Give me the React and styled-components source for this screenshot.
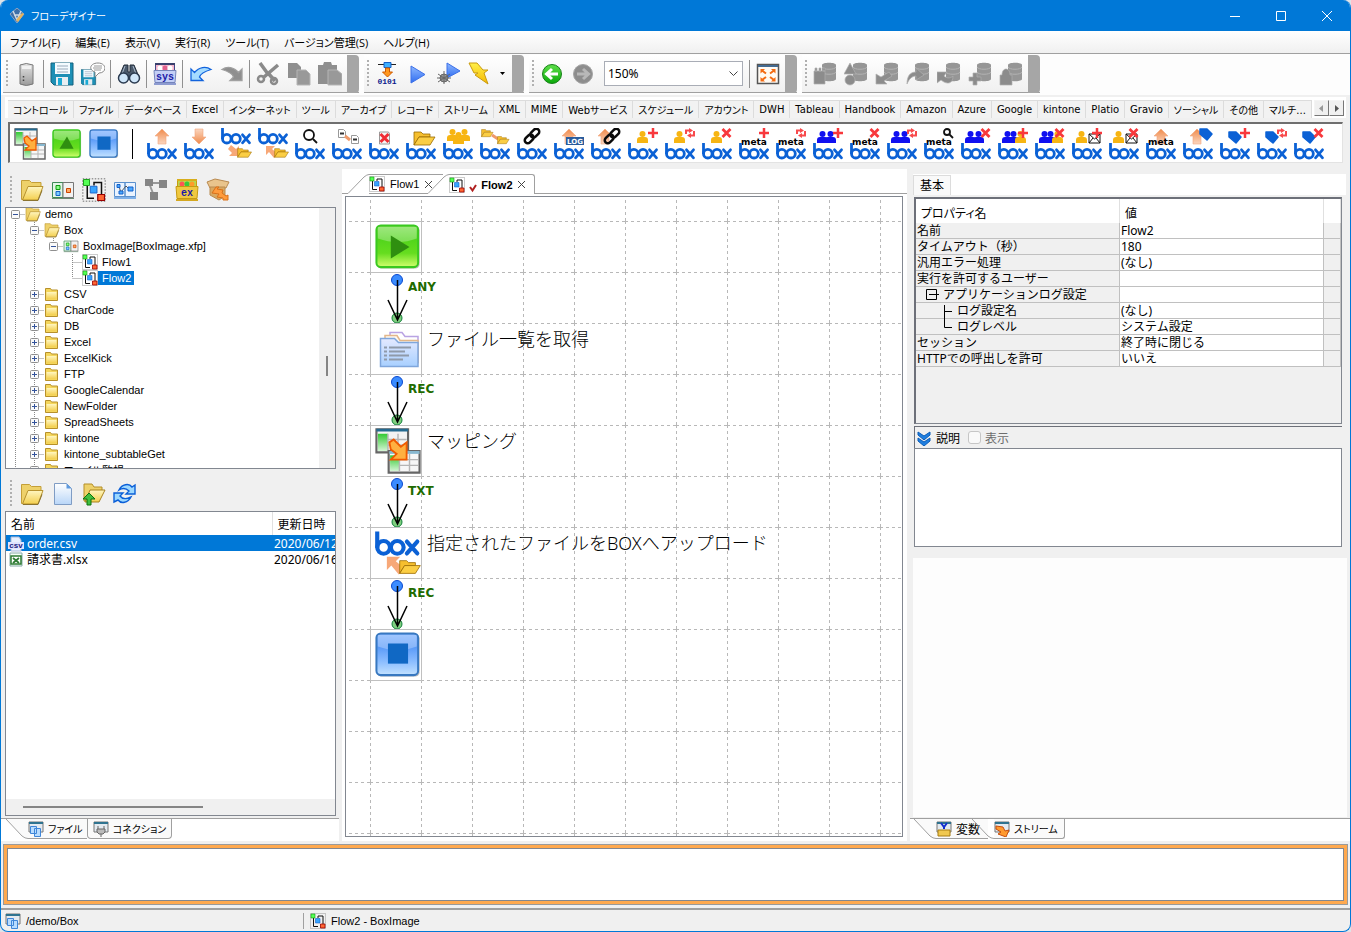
import styled, {createGlobalStyle, css} from 'styled-components';
import {useState} from "react";

const categories = ["コントロール", "ファイル", "データベース", "Excel", "インターネット", "ツール", "アーカイブ", "レコード", "ストリーム", "XML", "MIME", "Webサービス", "スケジュール", "アカウント", "DWH", "Tableau", "Handbook", "Amazon", "Azure", "Google", "kintone", "Platio", "Gravio", "ソーシャル", "その他", "マルチ..."];

const menus = ["ファイル(F)", "編集(E)", "表示(V)", "実行(R)", "ツール(T)", "バージョン管理(S)", "ヘルプ(H)"];

// branch codes: v = line, b = blank, t = tee, e = end, r = root
const tree = [
    {name: "demo", icon: "open", cells: ["r-"]},
    {name: "Box", icon: "open", cells: ["v", "t-"]},
    {name: "BoxImage[BoxImage.xfp]", icon: "project", cells: ["v", "v", "e-"]},
    {name: "Flow1", icon: "flow", cells: ["v", "v", "b", "t"]},
    {name: "Flow2", icon: "flow", cells: ["v", "v", "b", "e"]},
    ...["CSV", "CharCode", "DB", "Excel", "ExcelKick", "FTP", "GoogleCalendar", "NewFolder", "SpreadSheets", "kintone", "kintone_subtableGet", "ファイル監視"]
        .map((name) => ({name, icon: "folder", cells: ["v", "t+"]})),
];

const properties = [
    ["名前", "Flow2"],
    ["タイムアウト（秒）", "180"],
    ["汎用エラー処理", "(なし)"],
    ["実行を許可するユーザー", ""],
    ["アプリケーションログ設定", "", "group"],
    ["ログ設定名", "(なし)", "child"],
    ["ログレベル", "システム設定", "last"],
    ["セッション", "終了時に閉じる"],
    ["HTTPでの呼出しを許可", "いいえ"],
];

/* ---------- icons ---------- */

const Svg = ({w = 24, h = w, box, children}) => (
    <svg width={w} height={h} viewBox={box || `0 0 ${w} ${h}`} fill="none" aria-hidden="true">{children}</svg>
);

const Gradient = ({id, stops}) => (
    <linearGradient id={id} x1="0" y1="0" x2="0" y2="1">
        {stops.map((color, i) => <stop key={i} offset={i / (stops.length - 1)} stopColor={color}/>)}
    </linearGradient>
);

const Defs = () => (
    <HiddenSvg width="0" height="0" aria-hidden="true">
        <defs>
            <Gradient id="green" stops={["#7be04f", "#52d51c", "#66dd1f", "#d2ff6e"]}/>
            <Gradient id="blue" stops={["#7fb2ff", "#5b9bf8", "#8abcff", "#c3e2ff"]}/>
            <Gradient id="play" stops={["#8fb8ff", "#2f6df0"]}/>
            <Gradient id="paper" stops={["#ffffff", "#b9d6f8"]}/>
            <Gradient id="yellow" stops={["#fff6c0", "#f3cf4f"]}/>
            <Gradient id="peach" stops={["#f08a4a", "#fbd6bf"]}/>
            <Gradient id="metal" stops={["#e6e6e6", "#9a9a9a"]}/>
            <Gradient id="bolt" stops={["#fff04a", "#f5b800"]}/>
            <Gradient id="orb" stops={["#5fe04a", "#0aa80a"]}/>
            <Gradient id="slot" stops={["#33c933", "#d5f5d5"]}/>
            <Gradient id="list" stops={["#e4e9ff", "#a8d0ff"]}/>
            <pattern id="grid" width="51" height="51" x="24" y="24" patternUnits="userSpaceOnUse">
                <path d="M0 .5H51M.5 0V51" stroke="#b8b8b8" strokeDasharray="3 3" fill="none"/>
            </pattern>
        </defs>
    </HiddenSvg>
);

const OpenFolder = ({size = 24}) => (
    <Svg w={size} box="0 0 24 24">
        <path d="M1.500 2.500h8l2 2h9.500v6H8L3 21.500H1.500z" fill="#eed16a" stroke="#c49f38"/>
        <path d="M8 8.500h15L18 22H2.500z" fill="url(#yellow)" stroke="#b8932f"/>
        <path d="M3 22.500h15l4-10" stroke="#8b7431"/>
    </Svg>
);

const ClosedFolder = () => (
    <Svg w={16}>
        <path d="M1.500 14V2.500h5l1 1.500h6v10.500h-12z" fill="#f4d65c" stroke="#b7902b"/>
        <path d="M2.500 6h10v7h-10z" fill="url(#yellow)"/>
    </Svg>
);

const FlowIcon = ({size = 16}) => (
    <Svg w={size} box="0 0 16 16">
        <path d="M.5.5h15v15H.5z" stroke="#999" strokeDasharray="1 1"/>
        <path d="M3.500 5v8.500H8M8 5V3h5v8" stroke="#111"/>
        <path d="M1 1h4v4H1z" fill="#5f5" stroke="#191" strokeWidth=".6"/>
        <path d="M5.500 5.500h4.500v4.500h-4.500z" fill="#36a4ff" stroke="#1560c8" strokeWidth=".6"/>
        <path d="M10.500 11h4.500v4h-4.500z" fill="#f63" stroke="#900" strokeWidth=".8"/>
    </Svg>
);

const ProjectIcon = ({size = 24}) => (
    <Svg w={size} box="0 0 24 24">
        <path d="M1.500 4.500h10.500v15H1.500z" fill="#e3f5e8" stroke="#3d8a56"/>
        <path d="M12 4.500h10.500v15H12z" fill="#f2f2f2" stroke="#777"/>
        <path d="M1 20.500h22" stroke="#6a8a72"/>
        <path d="M5 7.500h4v4H5z" fill="#8f8" stroke="#191"/>
        <path d="M5 13.500h4v4H5z" fill="#7accff" stroke="#1560c8"/>
        <path d="M15.500 10.500h4v4h-4z" fill="#fa6" stroke="#c40"/>
    </Svg>
);

const SubflowIcon = () => (
    <Svg>
        <path d="M1.500 4.500h10.500v14H1.500zM12 4.500h10.500v14H12z" fill="#eaf3ff" stroke="#5b90cd"/>
        <path d="M1 20h22" stroke="#7fb0e8" strokeWidth="2"/>
        <path d="M6 8l2 7M8 14l5-6 3 3" stroke="#555"/>
        <path d="M4 6.500h3v3H4zM6 13h4v3H6zM15 9h5v4h-5z" fill="#4aa8ff" stroke="#1560c8"/>
    </Svg>
);

const NodesIcon = () => (
    <Svg>
        <path d="M5 5l5 13M5 5h14" stroke="#999" strokeWidth="2"/>
        <path d="M1 1h8v7H1zM15 2h8v8h-8zM6 14h8v8H6z" fill="#858585"/>
    </Svg>
);

const CrateIcon = ({label, blue}) => (
    <Svg>
        <path d="M2.500 1.500h19v9h-19z" fill={blue ? "#f5b6cc" : "#b9d64a"} stroke={blue ? "#444a88" : "#c79a10"}/>
        <path d="M2 2h20" stroke={blue ? "#39406c" : "#d8ae1c"} strokeWidth="2"/>
        <circle cx="7" cy="6" r="2.500" fill={blue ? "#fff" : "#f55"}/>
        <circle cx="12" cy="6" r="2.500" fill={blue ? "#e0608c" : "#3ac83a"}/>
        <circle cx="17" cy="6" r="2.500" fill={blue ? "#fff" : "#ff9b2a"}/>
        <path d="M1 8.500h22l-1 12H2z" fill={blue ? "#c3cff6" : "#f0c840"} stroke={blue ? "#7484bb" : "#c79a10"}/>
        <path d="M1 22h22" stroke={blue ? "#8d9bd0" : "#d5a820"} strokeWidth="2"/>
        <text x="12" y="18" textAnchor="middle" fontFamily="Liberation Mono" fontWeight="700" fontSize="10" fill="#1b1ba8">{label}</text>
    </Svg>
);

const PackageIcon = () => (
    <Svg>
        <path d="M1 4l8-3 14 3-3 6H4z" fill="#e9c48c" stroke="#b98a50"/>
        <path d="M4 9h15v9l-6 4-9-5z" fill="#d9a860" stroke="#b98a50"/>
        <path d="M10 9l-4 6 7 1-2 3 6 1v2h5v-5l-2 1-4-3 1-3-6-1 2-2z" fill="#ff9b3c" stroke="#d8701a"/>
    </Svg>
);

const ServerIcon = () => (
    <Svg>
        <path d="M6 3q6-3 13 0v19q-7 3-13 0z" fill="url(#metal)" stroke="#777"/>
        <path d="M8 4h9v3H8z" fill="#f2f2f2"/>
        <path d="M9.500 14v6" stroke="#444" strokeWidth="1.500" strokeDasharray="1.500 2"/>
    </Svg>
);

const SaveIcon = ({balloon}) => (
    <Svg>
        <g transform={balloon ? "translate(-1 7) scale(.68)" : undefined}>
            <path d="M1 1h22v22H4l-3-3z" fill="#1d8fb5" stroke="#12607c"/>
            <path d="M5 1h15v11H5z" fill="#f4fbff"/>
            <path d="M7 4h11M7 7h11M7 10h11" stroke="#9ab"/>
            <path d="M6 15h12v8H6z" fill="#e8eef2"/>
            <path d="M8 16h4v7H8z" fill="#1aa9d4"/>
        </g>
        {balloon && <>
            <path d="M17 1c9 0 9 10 1 10l-4 4v-5C7 8 9 1 17 1z" fill="#fff" stroke="#888"/>
            <path d="M13 4h8M12 6h9M13 8h7" stroke="#999"/>
        </>}
    </Svg>
);

const BinocularsIcon = () => (
    <Svg>
        <path d="M7 3h4v7h2V3h4l5 12H2z" fill="#4b5a6c" stroke="#222c3a"/>
        <path d="M8 4l-3 8M16 4l3 8" stroke="#a9b9cc"/>
        <circle cx="6.500" cy="16" r="5" fill="#cfe6fa" stroke="#2b3b50" strokeWidth="1.500"/>
        <circle cx="17.500" cy="16" r="5" fill="#cfe6fa" stroke="#2b3b50" strokeWidth="1.500"/>
    </Svg>
);

const UndoIcon = ({redo}) => (
    <Svg>
        <path transform={redo ? "matrix(-1 0 0 1 24 0)" : undefined}
              d="M2 7v11.500h12l-3.500-3.500c1-3 5-5.500 11.500-7.500C17 4 10 5 5.500 10.500z"
              fill={redo ? "#8f8f8f" : "#a5dcff"} stroke={redo ? "#a0a0a0" : "#1263dc"} strokeWidth="1.300"/>
    </Svg>
);

const CutIcon = () => (
    <Svg>
        <path d="M4 1l8 11M22 3L8 15M12 11l7 8" stroke="#8a8a8a" strokeWidth="3.500"/>
        <circle cx="5" cy="17" r="3" stroke="#8a8a8a" strokeWidth="2.500"/>
        <circle cx="18" cy="19" r="3" stroke="#8a8a8a" strokeWidth="2.500"/>
    </Svg>
);

const CopyIcon = () => (
    <Svg>
        <path d="M1 1h9l4 4v11H1z" fill="#8f8f8f"/>
        <path d="M10 8h9l4 4v11H10z" fill="#999" stroke="#b5b5b5"/>
    </Svg>
);

const PasteIcon = () => (
    <Svg>
        <path d="M0 3h5l1-3h7l1 3h5v19H0z" fill="#8f8f8f"/>
        <path d="M10 8h9l5 4v11H10z" fill="#999" stroke="#b5b5b5"/>
    </Svg>
);

const CompileIcon = () => (
    <Svg>
        <path d="M3 2.500h18" stroke="#222"/>
        <path d="M9 .5h7v5H9z" fill="#3eb0ff" stroke="#1560c8"/>
        <path d="M10.500 6h4v4h3l-5 5-5-5h3z" fill="#ff9820" stroke="#d05a00"/>
        <text x="12" y="22" textAnchor="middle" fontFamily="Liberation Mono" fontWeight="700" fontSize="8" fill="#0b1a8c">0101</text>
    </Svg>
);

const PlayIcon = ({debug}) => (
    <Svg>
        <path d={debug ? "M10 1l13 8-13 7z" : "M5 4l14 8.500L5 21z"} fill="url(#play)" stroke="#3c70e8"/>
        {debug && <>
            <circle cx="7" cy="16" r="4" fill="#999" stroke="#666"/>
            <path d="M1 12l12 8M1 20l12-8M7 9v13M0 16h14" stroke="#666"/>
        </>}
    </Svg>
);

const BoltIcon = () => (
    <Svg>
        <path d="M1 1h8l6 7h5l-4 3 4 11L7 13l3-2H6z" fill="url(#bolt)" stroke="#c99a10"/>
    </Svg>
);

const NavIcon = ({forward}) => (
    <Svg>
        <circle cx="12" cy="12" r="9.500" fill={forward ? "#8d8d8d" : "url(#orb)"} stroke={forward ? "#a5a5a5" : "#188018"}/>
        <path d={forward ? "M6 12h11M12 7l5.500 5-5.500 5" : "M18 12H7M12 7l-5.500 5 5.500 5"} stroke={forward ? "#b8b8b8" : "#fff"} strokeWidth="3"/>
    </Svg>
);

const FitIcon = () => (
    <Svg>
        <path d="M1.500 2.500h21v19h-21z" fill="#fffaf3" stroke="#555" strokeWidth="1.500"/>
        <path d="M2 4h20" stroke="#446a90" strokeWidth="2"/>
        <path d="M4.500 11.500V7H9zM15 7h4.500v4.500zM4.500 15v4.500H9zM19.500 15v4.500H15z" fill="#f36b12"/>
        <path d="M6 8.500l4 3M18 8.500l-4 3M6 18l4-3M18 18l-4-3" stroke="#f36b12" strokeWidth="2"/>
    </Svg>
);

const dbOverlays = [
    "M1 9h11v13H1zM2 6h2v3H2zM6 6h2v3H6zM10 6h2v3h-2z",
    "M6 1l6 11H0zM6 13a5 5 0 110 10 5 5 0 010-10z",
    "M1 12v10h11l-3-3 8-5-3-4-8 5z",
    "M1 22c0-8 3-12 9-12V6l8 7-8 5v-4c-4 0-7 3-9 8z",
    "M0 10v11l4-3c6 5 12 4 12-4-3 3-7 2-9 0l3-4z",
    "M5 11h4v4h4v4H9v4H5v-4H1v-4h4z",
    "M1 13h2c0-8 8-8 8 0h2v10H1z",
];

const DbIcon = ({kind}) => (
    <Svg>
        <path d="M9 3c0-3 14-3 14 0v14c0 3-14 3-14 0z" fill="#969696"/>
        <path d="M9 5c1 3 13 3 14 0M9 10c1 3 13 3 14 0" stroke="#b3b3b3"/>
        <path d={dbOverlays[kind]} fill="#8c8c8c" stroke="#b0b0b0" strokeWidth=".7"/>
    </Svg>
);

const NewFileIcon = () => (
    <Svg>
        <path d="M3.500 1.500h12l5 5v16h-17z" fill="url(#paper)" stroke="#7f9cc4"/>
        <path d="M15.500 1.500v5h5z" fill="#5f9be0"/>
    </Svg>
);

const UploadFolderIcon = () => (
    <Svg>
        <path d="M2 2h8l2 3h8v5H8L4 19H2z" fill="#eed16a" stroke="#b48f28"/>
        <path d="M8 8h15l-6 12H3z" fill="url(#yellow)" stroke="#a8831f"/>
        <path d="M5 23v-6H1l6-6 6 6H9v6z" fill="#3fbf3f" stroke="#0d720d"/>
    </Svg>
);

const RefreshIcon = () => (
    <Svg>
        <path d="M6 8C9 2 16 1 19 5l3-2v9h-9l3-3c-3-3-7-3-10-1z" fill="#9cd8ff" stroke="#0a5fd8" strokeWidth="1.400"/>
        <path d="M18 15c-3 6-10 7-13 3l-4 2v-9h9l-3 3c3 4 7 3 11 1z" fill="#9cd8ff" stroke="#0a5fd8" strokeWidth="1.400"/>
    </Svg>
);

const MapIcon = ({size = 32}) => (
    <Svg w={size} box="0 0 32 32">
        <path d="M1 1h22v16H1z" fill="#f3f3f3" stroke="#666" strokeWidth="1.500"/>
        <path d="M1 1.500h22" stroke="#256a90" strokeWidth="2"/>
        <path d="M2 4h7v12H2z" fill="url(#slot)"/>
        <path d="M9 4v12M16 4v12M9 8h13M9 12h13" stroke="#b5b5b5"/>
        <path d="M9.500 16h21.500v15H9.500z" fill="#f7f7f7" stroke="#666" strokeWidth="1.500"/>
        <path d="M10 17h21" stroke="#88b8d0" strokeWidth="2"/>
        <path d="M10.500 19h6.500v11h-6.500z" fill="url(#slot)"/>
        <path d="M17 18v12M24 18v12M17 22h13M17 26h13" stroke="#b5b5b5"/>
        <path d="M10 10l3-2 5 5 4-3v12h-11l4-4-4-3z" fill="#ffb040" stroke="#f05a00" strokeWidth="1.300"/>
    </Svg>
);

const GlassIcon = ({size = 30, color = "green", shape}) => (
    <Svg w={size} box="0 0 32 32">
        <rect x="1.500" y="1.500" width="29.500" height="29.500" rx="3" fill="#888" opacity=".55"/>
        <rect x="1" y="1" width="29" height="29" rx="3" fill={`url(#${color})`} stroke={color === "green" ? "#3ac820" : "#3878c0"} strokeWidth="1.400"/>
        <path d="M2 2h27v8q-13 5-27 0z" fill="#fff" opacity=".28"/>
        {shape === "up" && <path d="M16 8l7 13H8z" fill="#2f8f10"/>}
        {shape === "right" && <path d="M11 8l13 8-13 8z" fill="#2f8f10"/>}
        {shape === "stop" && <path d="M9 8h14v14H9z" fill="#1068c4"/>}
    </Svg>
);

const ListIcon = () => (
    <Svg w={44}>
        <path d="M14 5.500h12l3 4h13v26H14z" fill="#fff" stroke="#b9a3e3" strokeWidth="1.500"/>
        <path d="M9 8.500h12l3 5h18v22H9z" fill="#fff8ef" stroke="#e3b78a" strokeWidth="1.500"/>
        <path d="M4.500 11.500h14l4 4h19.500v24H4.500z" fill="url(#list)" stroke="#7fa6dc" strokeWidth="1.500"/>
        <path d="M8 20.500h3M8 24.500h3M8 28.500h3M8 32.500h3M13 20.500h22M13 24.500h16M13 28.500h20M13 32.500h14" stroke="#8f9aaa" strokeWidth="2"/>
    </Svg>
);

/* Box mark, 30 wide and 17 high */
const BoxMark = ({y = 15}) => (
    <g transform={`translate(0 ${y})`} stroke="#0b61d5" strokeWidth="2.800">
        <path d="M1.500 0v11"/>
        <circle cx="5.800" cy="10.700" r="4.300"/>
        <circle cx="15" cy="10.700" r="4.300"/>
        <path d="M21.500 6.800l7 8M28.500 6.800l-7 8" strokeLinecap="round"/>
    </g>
);

const Arrow = ({x = 15, down}) => (
    <path transform={down ? "matrix(1 0 0 -1 0 17)" : undefined} d={`M${x} 1l7 7h-3v8h-8v-8h-3z`} fill="url(#peach)" stroke="#f2a67c" strokeWidth=".6"/>
);

const MiniFolder = ({x = 0, y = 0, s = 1}) => (
    <g transform={`translate(${x} ${y}) scale(${s})`}>
        <path d="M1 1h7l2 2h7v3H6l-5 8z" fill="#f6bf2e" stroke="#9a6a00" strokeWidth=".8"/>
        <path d="M6 6h16l-5 8H1z" fill="#fbce44" stroke="#9a6a00" strokeWidth=".8"/>
    </g>
);

const Person = ({x = 9, y = 2, color = "#f7b512"}) => (
    <g transform={`translate(${x} ${y})`} fill={color}>
        <circle cx="5.500" cy="4" r="3"/>
        <path d="M0 13V10q0-3 3-3h5q3 0 3 3v3z"/>
    </g>
);

const Plus = () => <path d="M25 0v10M20 5h10" stroke="#f8383c" strokeWidth="2.500"/>;
const Cross = () => <path d="M20.500 1l8 8M28.500 1l-8 8" stroke="#f8383c" strokeWidth="2.800"/>;
const Loop = () => (
    <>
        <path d="M21 6V2.500h4M29 3v4.500h-4" stroke="#f84a4c" strokeWidth="2"/>
        <path d="M24 0l4 2.500-4 2.500zM26 5l-4 2.500 4 2.500z" fill="#f84a4c"/>
    </>
);
const Tag = ({x = 8, y = 3}) => <path transform={`translate(${x} ${y})`} d="M1 1h7l5 5-5 6-7-6z" fill="#0b61d5" stroke="#0b61d5" strokeWidth="1.500" strokeLinejoin="round"/>;
const Meta = () => <text x="15" y="17" textAnchor="middle" fontFamily="DejaVu Sans" fontWeight="700" fontSize="9" fill="#000">meta</text>;
const Mail = () => <path d="M17 6h11v9H17zM17 6l5.500 5L28 6M17 15l4-5M28 15l-4-5" fill="#fff" stroke="#111"/>;
const Chain = () => (
    <g stroke="#0a0a0a" strokeWidth="2.500" transform="rotate(-45 15 8)">
        <rect x="6" y="5" width="10" height="6" rx="3"/>
        <rect x="14" y="5" width="10" height="6" rx="3"/>
    </g>
);
const Lens = ({x = 14, y = 7, r = 5}) => (
    <g stroke="#111" strokeWidth="1.800">
        <circle cx={x} cy={y} r={r}/>
        <path d={`M${x + r - 1} ${y + r - 1}l4 4`}/>
    </g>
);
const Doc = ({x, y}) => (
    <g transform={`translate(${x} ${y})`}>
        <path d="M.5.5h5l2 2v6h-7z" fill="#fff" stroke="#999"/>
        <path d="M2 4.500h4" stroke="#333" strokeWidth="2"/>
    </g>
);
const Pair = ({mixed}) => (
    <>
        <Person x={4} color="#1010f0"/>
        <Person x={mixed ? 10 : 12} color="#1010f0"/>
        {mixed && <Person x={17} color="#f7b512"/>}
    </>
);

const boxTools = [
    ["アップロード", <Arrow/>],
    ["ダウンロード", <Arrow down/>],
    ["フォルダーへ取得", "get"],
    ["フォルダーから登録", "put"],
    ["検索", <Lens/>],
    ["コピー", <><Doc x={6} y={1}/><path d="M13 8l5 4" stroke="#f09a6a" strokeWidth="3"/><Doc x={19} y={7}/></>],
    ["削除", <><path d="M10.500 4h9l1 2v10h-10z" fill="#f6f6f6" stroke="#999"/><path d="M11.500 6l8 8M19.500 6l-8 8" stroke="#f02c34" strokeWidth="3"/></>],
    ["フォルダー", <MiniFolder x={7} y={3}/>],
    ["グループ", <><Person x={4} y={0}/><Person x={16} y={0}/><Person x={10} y={3}/></>],
    ["移動", <><MiniFolder x={1} y={1} s={.55}/><path d="M12 7l6 4" stroke="#f09a6a" strokeWidth="3"/><MiniFolder x={17} y={8} s={.55}/></>],
    ["リンク", <Chain/>],
    ["ログ", <><Arrow/><path d="M12 9h18v8H12z" fill="#2a5c9c"/><text x="21" y="16" textAnchor="middle" fontFamily="DejaVu Sans" fontWeight="700" fontSize="7" fill="#fff">LOG</text></>],
    ["リンク作成", <><Arrow x={14}/><g transform="translate(6 0)"><Chain/></g></>],
    ["ユーザー追加", <><Person/><Plus/></>],
    ["ユーザー更新", <><Person/><Loop/></>],
    ["ユーザー削除", <><Person/><Cross/></>],
    ["メタ追加", <><Meta/><Plus/></>],
    ["メタ更新", <><Meta/><Loop/></>],
    ["グループ追加", <><Pair/><Plus/></>],
    ["メタ削除", <><Meta/><Cross/></>],
    ["グループ更新", <><Pair/><Loop/></>],
    ["メタ検索", <><Meta/><Lens x={23} y={4} r={3}/></>],
    ["グループ削除", <><Pair/><Cross/></>],
    ["メンバー追加", <><Pair mixed/><Plus/></>],
    ["メンバー削除", <><Pair mixed/><Cross/></>],
    ["招待", <><Person x={4}/><Mail/><Plus/></>],
    ["招待取消", <><Person x={4}/><Mail/><Cross/></>],
    ["メタ登録", <><Arrow/><Meta/></>],
    ["タグ登録", <><Arrow x={14}/><Tag x={16} y={0}/></>],
    ["タグ追加", <><Tag/><Plus/></>],
    ["タグ更新", <><Tag/><Loop/></>],
    ["タグ削除", <><Tag/><Cross/></>],
];

const Transfer = ({down}) => (
    <>
        <path d={down ? "M10 17l5 4 3-3v10H8l3-3-4-4z" : "M8 18h9l-3 3 6 5-4 4-5-6-3 3z"} fill="#f7a878"/>
        <MiniFolder x={16} y={20} s={.66}/>
    </>
);

const BoxToolIcon = ({glyph}) => {
    const onTop = glyph === "get" || glyph === "put";
    return (
        <Svg w={32} box="-1 0 32 32">
            {onTop ? <Transfer down={glyph === "get"}/> : glyph}
            <BoxMark y={onTop ? 0 : 15}/>
        </Svg>
    );
};

const WindowIcon = ({kind}) => (
    <Svg w={16}>
        <path d="M1 1h14v10H1z" fill="#e4eaf0" stroke="#777"/>
        <path d="M1 2h14" stroke="#2f7390" strokeWidth="2"/>
        {kind === "file" && <path d="M2.500 5.500h6v7h-6zM6.500 7.500h6v8h-6z" fill="#b8dcff" stroke="#3f86d8"/>}
        {kind === "plug" && <path d="M5 5v3M11 5v3M4 8h8v3l-2 2H6l-2-2zM8 13v3" fill="#bbb" stroke="#666"/>}
        {kind === "var" && <>
            <path d="M5 2l3 4 3-4M8 5v3" stroke="#1530d0" strokeWidth="2"/>
            <path d="M2 9h12v6H2z" fill="#f0c850" stroke="#a87c10"/>
        </>}
        {kind === "stream" && <path d="M2 5l7 1 2 4 4-1-3 7-8-3 3-2-5-3z" fill="#ff9a2e" stroke="#c84d0c"/>}
    </Svg>
);

const CsvIcon = () => (
    <Svg w={16}>
        <path d="M3 1h8l2 3v11H3z" fill="#e8f0ff" stroke="#a9b8d8"/>
        <path d="M0 6h16v7H0z" fill="#dfe4ff"/>
        <text x="8" y="12" textAnchor="middle" fontFamily="Liberation Sans" fontWeight="700" fontSize="8" fill="#1a1a80">csv</text>
    </Svg>
);

const XlsIcon = () => (
    <Svg w={16}>
        <path d="M2 1h12v13H2z" fill="#f4fff4" stroke="#8aa"/>
        <path d="M3 4h10v8H3z" fill="#fff" stroke="#2d7a32" strokeWidth="1.500"/>
        <path d="M5 6l6 5M11 6l-6 5" stroke="#2d7a32" strokeWidth="1.800"/>
    </Svg>
);

const Branch = ({code}) => {
    const lines = {v: "M9.500 0V16", t: "M9.500 0V16M9.500 8.500H19", e: "M9.500 0V8M9.500 8.500H19", r: "M9.500 8V16M9.500 8.500H19", b: ""};
    return (
        <Svg w={19} h={16}>
            <path d={lines[code[0]]} stroke="#8a8a8a" strokeDasharray="1 1"/>
            {code[1] && <>
                <rect x="5.500" y="4.500" width="8" height="8" rx="1" fill="#fafafa" stroke="#8f8f8f"/>
                <path d={code[1] === "+" ? "M7 8.500h5M9.500 6v5" : "M7 8.500h5"} stroke="#33539b"/>
            </>}
        </Svg>
    );
};

const treeIcons = {
    open: <OpenFolder size={16}/>,
    folder: <ClosedFolder/>,
    project: <ProjectIcon size={16}/>,
    flow: <FlowIcon/>,
};

/* ---------- parts ---------- */

const Link = ({label}) => (
    <LinkRow>
        <Svg w={52} h={50}>
            <circle cx="27" cy="7" r="5.500" fill="#3b8cff" stroke="#0a49d0"/>
            <circle cx="27" cy="45" r="5" fill="#7fcf7f" stroke="#12803a"/>
            <path d="M27.500 7v40M18 27l9.500 20 9.500-20" stroke="#000" strokeWidth="1.500"/>
        </Svg>
        <LinkLabel>{label}</LinkLabel>
    </LinkRow>
);

const Step = ({icon, label}) => (
    <StepRow>
        <StepBox>{icon}</StepBox>
        {label && <StepLabel>{label}</StepLabel>}
    </StepRow>
);

const Tools = ({items}) => items.map(([name, icon], i) => (
    name === "|" ? <Divider key={i}/> : <ToolButton key={i} aria-label={name}>{icon}</ToolButton>
));

const App = () => {
    const [zoom, setZoom] = useState("150%");
    const [selected, setSelected] = useState("Flow2");

    return (
        <Window>
            <Global/>
            <Defs/>
            <TitleBar>
                <Svg w={16}>
                    <path d="M8 0l7 6-7 9-7-9z" fill="#3d6ea8" stroke="#8aa4c4"/>
                    <path d="M4 3l4 9 4-9M5 7h7" stroke="#cfd8e2" strokeWidth="1.500"/>
                    <path d="M7 12l6-7 2 1-6 8z" fill="#e6b45c"/>
                </Svg>
                <Title>フローデザイナー</Title>
                <CaptionButton aria-label="最小化"><Svg w={10}><path d="M0 5.500h10" stroke="#fff"/></Svg></CaptionButton>
                <CaptionButton aria-label="最大化"><Svg w={10}><path d="M.5.5h9v9h-9z" stroke="#fff"/></Svg></CaptionButton>
                <CaptionButton aria-label="閉じる"><Svg w={10}><path d="M0 0l10 10M10 0L0 10" stroke="#fff"/></Svg></CaptionButton>
            </TitleBar>
            <MenuBar>
                {menus.map((menu) => <MenuItem key={menu}>{menu}</MenuItem>)}
            </MenuBar>
            <ToolRow>
                <ToolBar>
                    <Grip/>
                    <Tools items={[
                        ["サーバー", <ServerIcon/>], ["|"], ["保存", <SaveIcon/>], ["コメント付き保存", <SaveIcon balloon/>], ["|"],
                        ["検索", <BinocularsIcon/>], ["|"], ["システム変数", <CrateIcon label="sys" blue/>], ["|"],
                        ["元に戻す", <UndoIcon/>], ["やり直し", <UndoIcon redo/>], ["|"],
                        ["切り取り", <CutIcon/>], ["コピー", <CopyIcon/>], ["貼り付け", <PasteIcon/>],
                    ]}/>
                    <EndCap/>
                </ToolBar>
                <ToolBar>
                    <Grip/>
                    <Tools items={[["コンパイル", <CompileIcon/>], ["実行", <PlayIcon/>], ["デバッグ", <PlayIcon debug/>], ["クイック実行", <BoltIcon/>]]}/>
                    <DropButton aria-label="実行メニュー"><Svg w={5} h={3}><path d="M0 0h5L2.500 3z" fill="#000"/></Svg></DropButton>
                    <EndCap/>
                </ToolBar>
                <ToolBar>
                    <Grip/>
                    <Tools items={[["戻る", <NavIcon/>], ["進む", <NavIcon forward/>]]}/>
                    <ZoomBox>
                        <ZoomSelect aria-label="表示倍率" value={zoom} onChange={(e) => setZoom(e.target.value)}>
                            {["50%", "100%", "150%", "200%"].map((value) => <option key={value}>{value}</option>)}
                        </ZoomSelect>
                        <Chevron><Svg w={9} h={5}><path d="M.5.5l4 4 4-4" stroke="#444"/></Svg></Chevron>
                    </ZoomBox>
                    <Tools items={[["|"], ["全体表示", <FitIcon/>]]}/>
                    <EndCap/>
                </ToolBar>
                <ToolBar>
                    <Grip/>
                    <Tools items={dbOverlays.map((_, i) => [`バージョン管理${i + 1}`, <DbIcon kind={i}/>])}/>
                    <EndCap/>
                </ToolBar>
            </ToolRow>
            <PaletteArea>
                <CategoryStrip>
                    {categories.map((name) => <Category key={name}>{name}</Category>)}
                    <Scroller>
                        <ScrollButton aria-label="左へ"><Svg w={5} h={9}><path d="M4 1v7L0 4.500z" fill="#999"/></Svg></ScrollButton>
                        <ScrollButton aria-label="右へ"><Svg w={5} h={9}><path d="M1 1v7l4-3.500z" fill="#555"/></Svg></ScrollButton>
                    </Scroller>
                </CategoryStrip>
                <Palette>
                    <PaletteButton aria-label="マッピング"><MapIcon/></PaletteButton>
                    <PaletteButton aria-label="開始"><GlassIcon shape="up"/></PaletteButton>
                    <PaletteButton aria-label="終了"><GlassIcon color="blue" shape="stop"/></PaletteButton>
                    <PaletteRule/>
                    {boxTools.map(([name, glyph]) => (
                        <PaletteButton key={name} aria-label={name}><BoxToolIcon glyph={glyph}/></PaletteButton>
                    ))}
                </Palette>
            </PaletteArea>
            <Main>
                <LeftColumn>
                    <DockBar>
                        <Grip/>
                        <Tools items={[
                            ["開く", <OpenFolder/>], ["プロジェクト", <ProjectIcon/>], ["フロー", <FlowIcon size={24}/>],
                            ["サブフロー", <SubflowIcon/>], ["構成", <NodesIcon/>], ["外部変数", <CrateIcon label="ex"/>], ["パッケージ", <PackageIcon/>],
                        ]}/>
                    </DockBar>
                    <TreePanel>
                        <TreeList>
                            {tree.map((node) => (
                                <TreeRow key={node.name}>
                                    {node.cells.map((code, i) => <Branch key={i} code={code}/>)}
                                    {treeIcons[node.icon]}
                                    <TreeName $selected={node.name === selected} onClick={() => setSelected(node.name)}>{node.name}</TreeName>
                                </TreeRow>
                            ))}
                        </TreeList>
                        <VScroll><VThumb/></VScroll>
                    </TreePanel>
                    <DockBar $spaced>
                        <Grip/>
                        <Tools items={[["開く", <OpenFolder/>], ["新規ファイル", <NewFileIcon/>], ["アップロード", <UploadFolderIcon/>], ["更新", <RefreshIcon/>]]}/>
                    </DockBar>
                    <FilePanel>
                        <FileScroll>
                            <FileTable>
                                <thead>
                                    <tr><th>名前</th><th>更新日時</th></tr>
                                </thead>
                                <tbody>
                                    <FileRow $selected>
                                        <td><FileName><CsvIcon/>order.csv</FileName></td>
                                        <td>2020/06/12 10:15</td>
                                    </FileRow>
                                    <FileRow>
                                        <td><FileName><XlsIcon/>請求書.xlsx</FileName></td>
                                        <td>2020/06/16 14:02</td>
                                    </FileRow>
                                </tbody>
                            </FileTable>
                        </FileScroll>
                        <HScroll><HThumb/></HScroll>
                    </FilePanel>
                    <BottomTabs>
                        <Slant/>
                        <BottomTab><WindowIcon kind="file"/>ファイル</BottomTab>
                        <BottomTab $edge><WindowIcon kind="plug"/>コネクション</BottomTab>
                    </BottomTabs>
                </LeftColumn>
                <Editor>
                    <EditorTabs>
                        <TabSlope/>
                        <EditorTab><FlowIcon/>Flow1<CloseMark/></EditorTab>
                        <TabSlope $overlap/>
                        <EditorTab $active>
                            <FlowIcon/>
                            <Svg w={8} h={16}><path d="M1 10l2.500 3.500L7 8" stroke="#b02020" strokeWidth="2"/></Svg>
                            <b>Flow2</b>
                            <CloseMark/>
                        </EditorTab>
                    </EditorTabs>
                    <Canvas>
                        <GridLines aria-hidden="true"><rect width="100%" height="100%" fill="url(#grid)"/></GridLines>
                        <Flow>
                            <Step icon={<GlassIcon size={46} shape="right"/>}/>
                            <Link label="ANY"/>
                            <Step icon={<ListIcon/>} label="ファイル一覧を取得"/>
                            <Link label="REC"/>
                            <Step icon={<MapIcon size={46}/>} label="マッピング"/>
                            <Link label="TXT"/>
                            <Step icon={<Svg w={46} box="0 0 31 31"><Transfer/><BoxMark y={1}/></Svg>} label="指定されたファイルをBOXへアップロード"/>
                            <Link label="REC"/>
                            <Step icon={<GlassIcon size={46} color="blue" shape="stop"/>}/>
                        </Flow>
                    </Canvas>
                </Editor>
                <RightColumn>
                    <PropertyTabs><PropertyTab>基本</PropertyTab></PropertyTabs>
                    <PropertyPanel>
                        <PropertyTable>
                            <colgroup><col/><col/><SpareCol/></colgroup>
                            <thead>
                                <tr><th>プロパティ名</th><th>値</th><th/></tr>
                            </thead>
                            <tbody>
                                {properties.map(([name, value, kind]) => (
                                    <tr key={name}>
                                        <td>
                                            <PropertyName $kind={kind}>
                                                {kind === "group" && <Svg w={14} h={14}><path d="M1.500 2.500h10v10h-10zM4 7.500h10" stroke="#000"/></Svg>}
                                                {kind === "child" && <Svg w={10} h={16}><path d="M1.500 2v14M1.500 8.500H9" stroke="#000"/></Svg>}
                                                {kind === "last" && <Svg w={10} h={16}><path d="M1.500 0v8.500H9" stroke="#000"/></Svg>}
                                                {name}
                                            </PropertyName>
                                        </td>
                                        <td>{value}</td>
                                        <td/>
                                    </tr>
                                ))}
                            </tbody>
                        </PropertyTable>
                    </PropertyPanel>
                    <NoteBar>
                        <Svg w={16}>
                            <path d="M2 2l6 4 6-4v3L8 10 2 5zM2 8l6 4 6-4v3l-6 5-6-5z" fill="#1f7fe0" stroke="#0a5cb8"/>
                        </Svg>
                        <label htmlFor="note">説明</label>
                        <ShowLabel><CheckBox type="checkbox" disabled/>表示</ShowLabel>
                    </NoteBar>
                    <Note id="note"/>
                    <StreamPanel/>
                    <BottomTabs>
                        <Slant/>
                        <BottomTab $tucked><WindowIcon kind="var"/>変数</BottomTab>
                        <Slant $overlap/>
                        <BottomTab $last><WindowIcon kind="stream"/>ストリーム</BottomTab>
                    </BottomTabs>
                </RightColumn>
            </Main>
            <Output/>
            <StatusBar>
                <StatusCell $wide><WindowIcon kind="file"/>/demo/Box</StatusCell>
                <StatusCell><FlowIcon/>Flow2 - BoxImage</StatusCell>
            </StatusBar>
        </Window>
    );
};

export default App;

/* ---------- slanted tab edges ---------- */

const TabSlope = ({$overlap}) => (
    <SlopeBox $overlap={$overlap}>
        <Svg w={22} h={20}>
            <path d="M0 19.500L17 3q3-2.500 5-2.500V20H0z" fill="#fff"/>
            <path d="M0 19.500h1L17 3q3-2.500 5-2.500" stroke="#a0a0a0"/>
        </Svg>
    </SlopeBox>
);

const Slant = ({$overlap}) => (
    <SlopeBox $overlap={$overlap}>
        <Svg w={22} h={20}>
            {!$overlap && <path d="M0 0L16 17q3 2.500 6 2.500V0z" fill="#fafafa"/>}
            <path d="M0 0L16 17q3 2.500 6 2.500" stroke="#a0a0a0"/>
        </Svg>
    </SlopeBox>
);

const CloseMark = () => <Svg w={9}><path d="M1 1l7 7M8 1L1 8" stroke="#444"/></Svg>;

/* ---------- styles ---------- */

// the font shorthand resets feature settings, so they always follow it
const ui = css`
    font: 11px "Liberation Sans", "Noto Sans CJK JP", sans-serif;
    font-feature-settings: "palt";
`;

const small = css`
    font: 10px "DejaVu Sans", "Noto Sans CJK JP", sans-serif;
    font-feature-settings: "palt";
`;

const text = css`
    font: 12px "Noto Sans", "Noto Sans CJK JP", sans-serif;
`;

const Global = createGlobalStyle`
    * {
        box-sizing: border-box;
    }

    body {
        margin: 0;
        background: #dfe3e8;
        color: #000;
        ${ui}
    }

    button {
        display: flex;
        align-items: center;
        padding: 0;
        border: 0;
        background: none;
        color: inherit;
        font: inherit;
        font-feature-settings: inherit;
        white-space: nowrap;
    }

    svg {
        display: block;
        flex: none;
    }
`;

const HiddenSvg = styled.svg`
    position: absolute;
`;

const Window = styled.div`
    display: flex;
    flex-direction: column;
    height: 100vh;
    min-height: 600px;
    overflow: hidden;
    border: 1px solid #0078d7;
    border-top: 0;
    border-radius: 8px;
    background: #f0f0f0;
`;

const TitleBar = styled.header`
    display: flex;
    align-items: center;
    height: 31px;
    flex: none;
    padding-left: 8px;
    background: #0078d7;
    color: #fff;
`;

const Title = styled.h1`
    flex: 1;
    margin: 0 0 0 6px;
    font-size: 10px;
    font-weight: 400;
`;

const CaptionButton = styled.button`
    justify-content: center;
    width: 46px;
    height: 31px;
`;

const MenuBar = styled.nav`
    display: flex;
    align-items: center;
    gap: 15px;
    height: 23px;
    flex: none;
    padding-left: 9px;
    border-bottom: 1px solid #a0a0a0;
    background: linear-gradient(#fff, #f0f0f0);
`;

const MenuItem = styled.button`
    font-family: "Open Sans", "Noto Sans CJK JP", sans-serif;
`;

const ToolRow = styled.div`
    display: flex;
    gap: 5px;
    flex: none;
    padding: 1px 2px 2px;
    background: #fdfdfd;
`;

const ToolBar = styled.div`
    display: flex;
    align-items: center;
    height: 38px;
    padding-left: 3px;
    border-bottom: 1px solid #a0a0a0;
    background: linear-gradient(#fff, #f0f0f0);
`;

const Grip = styled.div`
    width: 2px;
    height: 28px;
    margin-right: 2px;
    background: repeating-linear-gradient(#b0b0b0 0 2px, transparent 2px 4px);
`;

const ToolButton = styled.button`
    justify-content: center;
    width: 31px;
    height: 31px;
`;

const Divider = styled.div`
    width: 1px;
    height: 28px;
    margin: 0 2px;
    background: #909090;
`;

const EndCap = styled.div`
    width: 12px;
    height: 38px;
    margin-left: 2px;
    border-radius: 0 4px 4px 0;
    background: #a6a6a6;
`;

const DropButton = styled.button`
    justify-content: center;
    width: 15px;
    height: 31px;
`;

const ZoomBox = styled.div`
    position: relative;
    margin: 0 4px 0 6px;
`;

const ZoomSelect = styled.select`
    display: block;
    width: 139px;
    height: 25px;
    padding: 0 3px;
    appearance: none;
    border: 1px solid #a9adb6;
    border-radius: 0;
    background: #fff;
    color: #000;
    ${text}
`;

const Chevron = styled.span`
    position: absolute;
    top: 10px;
    right: 5px;
    pointer-events: none;
`;

const PaletteArea = styled.section`
    flex: none;
    padding: 2px 4px 4px;
`;

const CategoryStrip = styled.div`
    display: flex;
    height: 21px;
    padding: 3px 2px 0 3px;
    background: #fff;
`;

const Category = styled.button`
    flex: 1 1 auto;
    justify-content: center;
    border: solid #dcdcdc;
    border-width: 1px 1px 0 0;
    background: #f2f2f2;
    ${small}
`;

const Scroller = styled.div`
    display: flex;
    margin-left: 2px;
`;

const ScrollButton = styled.button`
    justify-content: center;
    width: 15px;
    height: 16px;
    border: 1px solid #f4f4f4;
    border-right-color: #777;
    border-bottom-color: #777;
    background: #f0f0f0;
`;

const Palette = styled.div`
    display: flex;
    margin: 4px 3px 0;
    padding: 4px 0 2px 1px;
    border: 2px solid #6f6f6f;
    border-right: 1px solid #e3e3e3;
    border-bottom: 1px solid #e3e3e3;
    background: #fff;
`;

const PaletteButton = styled.button`
    justify-content: center;
    width: 37px;
    height: 32px;
`;

const PaletteRule = styled.div`
    width: 1px;
    height: 30px;
    margin: 1px 10px;
    background: #000;
`;

const Main = styled.main`
    display: grid;
    grid-template-columns: 338px minmax(0, 1fr) 440px;
    gap: 3px;
    flex: 1;
    min-height: 0;
    padding-top: 2px;
`;

const LeftColumn = styled.section`
    display: flex;
    flex-direction: column;
    min-height: 0;
`;

const DockBar = styled.div`
    display: flex;
    align-items: center;
    height: 38px;
    flex: none;
    margin-top: ${({$spaced}) => $spaced ? "6px" : "2px"};
    padding-left: 9px;

    ${Grip} {
        margin-right: 4px;
    }
`;

const TreePanel = styled.div`
    display: flex;
    flex: 262 1 0;
    min-height: 0;
    margin: -2px 3px 0 4px;
    overflow: hidden;
    border: 1px solid #828790;
    background: #fff;
`;

const TreeList = styled.div`
    flex: 1;
    min-width: 0;
    margin-top: -2px;
`;

const TreeRow = styled.div`
    display: flex;
    height: 16px;
`;

const TreeName = styled.button`
    height: 14px;
    margin-top: 1px;
    padding: 0 3px 0 4px;
    ${({$selected}) => $selected && css`
        background: #0078d7;
        color: #fff;
    `}
`;

const VScroll = styled.div`
    display: flex;
    align-items: flex-start;
    justify-content: center;
    width: 16px;
    padding-top: 148px;
    background: #f0f0f0;
`;

const VThumb = styled.div`
    width: 2px;
    height: 20px;
    background: #858585;
`;

const FilePanel = styled.div`
    display: flex;
    flex: 305 1 0;
    flex-direction: column;
    min-height: 0;
    margin: -2px 3px 2px 4px;
    border: 1px solid #828790;
    background: #fff;
`;

const FileScroll = styled.div`
    flex: 1;
    min-height: 0;
    overflow: hidden;
`;

const FileTable = styled.table`
    width: 420px;
    table-layout: fixed;
    border-collapse: collapse;
    ${text}

    th {
        height: 23px;
        padding: 0 0 0 5px;
        border-right: 1px solid #e0e0e0;
        font-weight: 400;
        text-align: left;
    }

    th:first-child {
        width: 266px;
    }

    td {
        height: 16px;
        padding: 0 0 0 2px;
        line-height: 15px;
        white-space: nowrap;
    }
`;

const FileRow = styled.tr`
    background: ${({$selected}) => $selected ? "#0078d7" : "#fff"};
    color: ${({$selected}) => $selected ? "#fff" : "#000"};
`;

const FileName = styled.span`
    display: flex;
    gap: 3px;
    height: 15px;
`;

const HScroll = styled.div`
    display: flex;
    align-items: center;
    height: 16px;
    padding-left: 17px;
    background: #f0f0f0;
`;

const HThumb = styled.div`
    width: 180px;
    height: 2px;
    background: #858585;
`;

const BottomTabs = styled.div`
    display: flex;
    height: 23px;
    flex: none;
    padding-left: 5px;
    border-top: 1px solid #a0a0a0;
    background: #fff;
`;

const BottomTab = styled.button`
    gap: 4px;
    height: 20px;
    padding: 0 4px 0 0;
    border-bottom: 1px solid #a0a0a0;
    background: #fafafa;
    ${small}
    ${({$edge}) => $edge && css`
        padding: 0 5px;
        border: 1px solid #a0a0a0;
        border-top: 0;
        border-radius: 0 0 4px 4px;
    `}
    ${({$tucked}) => $tucked && css`
        padding-right: 8px;
        font-size: 12px;
    `}
    ${({$last}) => $last && css`
        padding-right: 6px;
        border-right: 1px solid #a0a0a0;
        border-radius: 0 0 3px 0;
    `}
`;

const SlopeBox = styled.span`
    margin-left: ${({$overlap}) => $overlap ? "-16px" : "0"};
`;

const Editor = styled.section`
    display: flex;
    flex-direction: column;
    min-height: 0;
    padding: 5px 0 4px;
    background: #fff;
`;

const EditorTabs = styled.div`
    display: flex;
    height: 20px;
    flex: none;
    padding-left: 5px;
    background: linear-gradient(#a0a0a0, #a0a0a0) bottom / 100% 1px no-repeat;
`;

const EditorTab = styled.button`
    gap: 5px;
    height: 20px;
    padding-right: 10px;
    border-top: 1px solid #a0a0a0;
    background: #fff;
    ${({$active}) => $active ? css`
        gap: 4px;
        padding-right: 8px;
        border-right: 1px solid #a0a0a0;
        border-radius: 0 3px 0 0;
    ` : css`
        border-bottom: 1px solid #a0a0a0;
    `}
`;

const Canvas = styled.div`
    position: relative;
    flex: 1;
    min-height: 0;
    margin: 2px 4px 0 3px;
    overflow: hidden;
    border: 1px solid #828790;
`;

const GridLines = styled.svg`
    position: absolute;
    inset: 0;
    width: 100%;
    height: 100%;
`;

const Flow = styled.div`
    position: relative;
    display: flex;
    flex-direction: column;
    padding: 24px;
`;

const StepRow = styled.div`
    display: flex;
    gap: 5px;
    height: 52px;
`;

const StepBox = styled.div`
    display: flex;
    align-items: center;
    justify-content: center;
    width: 52px;
    height: 52px;
    padding-left: 3px;
    border: 1px solid #c0c0c0;
    background: #fff;
`;

const StepLabel = styled.span`
    padding-top: 3px;
    font: 300 18px/26px "Noto Sans", "Noto Sans CJK JP", sans-serif;
`;

const LinkRow = styled.div`
    display: flex;
    height: 50px;
`;

const LinkLabel = styled.span`
    margin-left: -14px;
    padding-top: 6px;
    color: #1f6b00;
    font: 700 12px/16px "DejaVu Sans", sans-serif;
`;

const RightColumn = styled.section`
    display: flex;
    flex-direction: column;
    min-height: 0;
    padding-top: 5px;
    ${text}

    ${BottomTabs} {
        padding-left: 4px;
    }
`;

const PropertyTabs = styled.div`
    display: flex;
    height: 21px;
    flex: none;
    margin: 0 4px 0 3px;
    background: #fff;
`;

const PropertyTab = styled.button`
    margin-top: 1px;
    padding: 0 6px 2px;
    border: 1px solid #dcdcdc;
    border-bottom: 0;
    background: #f9f9f9;
`;

const PropertyPanel = styled.div`
    flex: 227 1 0;
    min-height: 0;
    margin: 2px 8px 2px 4px;
    overflow: hidden;
    border: 2px solid #6d7079;
    border-right: 1px solid #828790;
    border-bottom: 1px solid #828790;
`;

const PropertyTable = styled.table`
    width: 100%;
    table-layout: fixed;
    border-collapse: separate;
    border-spacing: 0;

    th {
        height: 24px;
        padding: 3px 5px 0;
        border-right: 1px solid #e0e0e0;
        background: #fff;
        font-weight: 400;
        font-feature-settings: "palt";
        text-align: left;
    }

    td {
        height: 16px;
        padding: 0 1px;
        border: solid #c0c0c0;
        border-width: 0 1px 1px 0;
        line-height: 15px;
        white-space: nowrap;
    }

    td:nth-child(2) {
        background: #fff;
    }
`;

const SpareCol = styled.col`
    width: 17px;
`;

const indents = {group: 8, child: 26, last: 26};

const PropertyName = styled.span`
    display: flex;
    gap: 4px;
    height: 15px;
    padding-left: ${({$kind}) => indents[$kind] || 0}px;
`;

const NoteBar = styled.div`
    display: flex;
    align-items: center;
    gap: 4px;
    height: 22px;
    flex: none;
    margin: 0 8px 0 4px;
    padding-left: 1px;
    border: solid #6d7079;
    border-width: 1px 0 0 1px;
`;

const ShowLabel = styled.label`
    display: flex;
    align-items: center;
    gap: 4px;
    margin-left: 4px;
    color: #6d6d6d;
`;

const CheckBox = styled.input`
    width: 13px;
    height: 13px;
    margin: 0;
    appearance: none;
    border: 1px solid #c6c6c6;
    border-radius: 3px;
    background: #f9f9f9;
`;

const Note = styled.textarea`
    flex: 98 1 0;
    min-height: 0;
    margin: 0 8px 11px 4px;
    padding: 0;
    border: 1px solid #828790;
    background: #fff;
    resize: none;
    font: inherit;
`;

const StreamPanel = styled.div`
    flex: 262 1 0;
    min-height: 0;
    margin: 0 3px 1px;
    background: #fdfdfd;
`;

const Output = styled.textarea.attrs({"aria-label": "出力"})`
    display: block;
    height: 61px;
    flex: none;
    margin: 3px 2px;
    border: 4px solid #ffa94e;
    outline: 1px solid #9a9a9a;
    outline-offset: -1px;
    box-shadow: inset 0 0 0 1px #828790;
    background: #fff;
    resize: none;
`;

const StatusBar = styled.footer`
    display: flex;
    align-items: center;
    height: 23px;
    flex: none;
    padding-left: 4px;
    border-top: 2px solid #a0a0a0;
`;

const StatusCell = styled.div`
    display: flex;
    align-items: center;
    gap: 5px;
    height: 16px;
    ${({$wide}) => $wide && css`
        width: 299px;
        margin-right: 6px;
        border-right: 1px solid #a0a0a0;
    `}
`;
